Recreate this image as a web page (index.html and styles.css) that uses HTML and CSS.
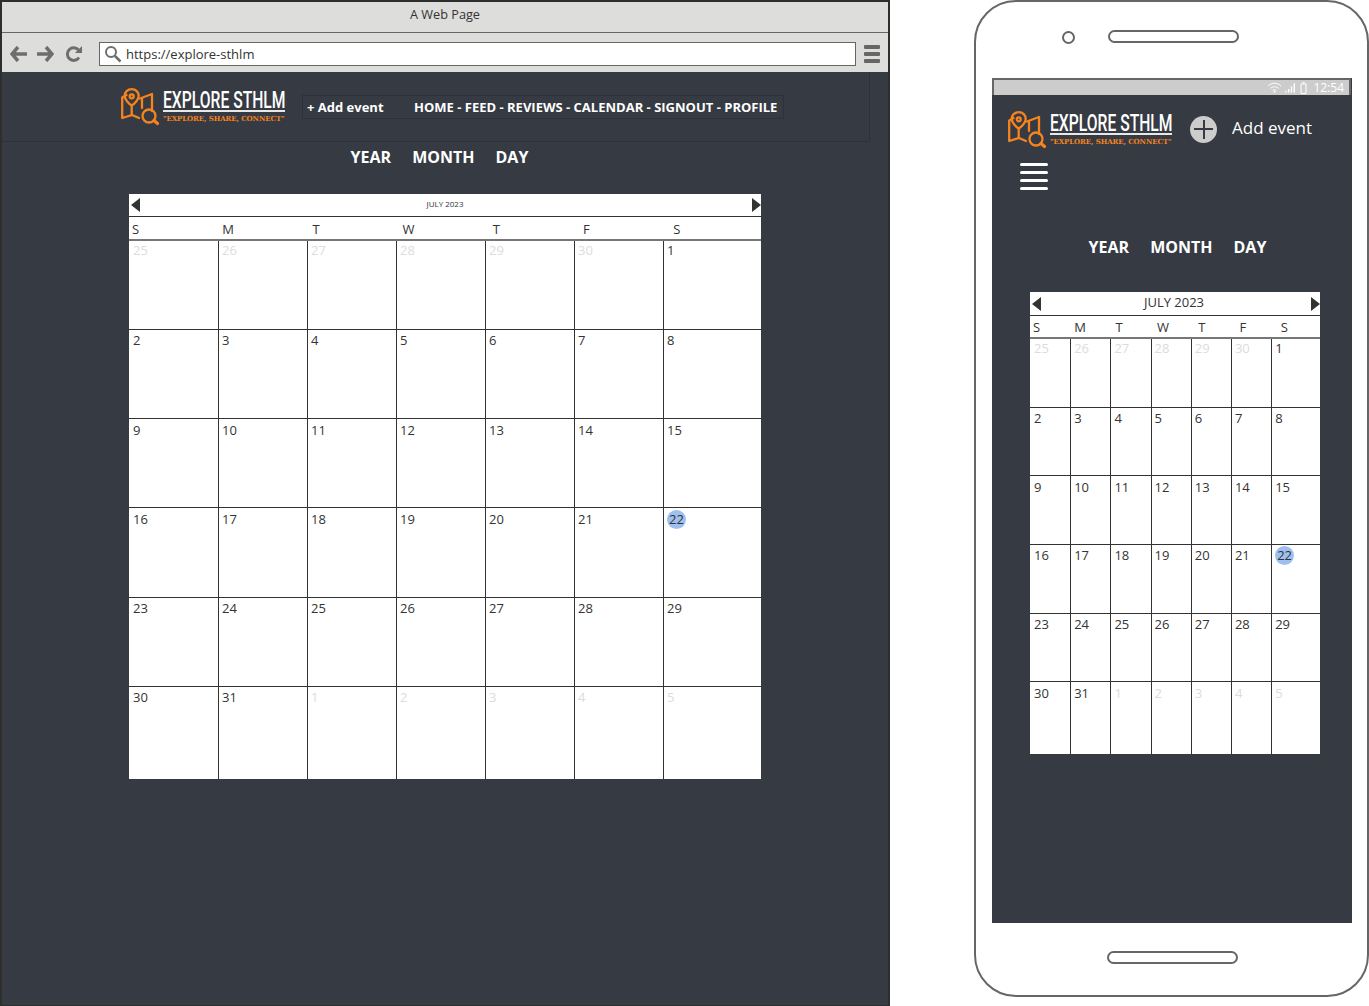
FILE: index.html
```html
<!DOCTYPE html>
<html lang="en">
<head>
<meta charset="utf-8">
<title>Explore STHLM wireframes</title>
<link rel="stylesheet" href="styles.css">
</head>
<body>
<svg class="defs" width="0" height="0" aria-hidden="true">
  <symbol id="logo-icon" viewBox="0 0 38 38">
    <g fill="none" stroke="#f5841f" stroke-width="2.300" stroke-linecap="round" stroke-linejoin="round">
      <path d="M5.500 7 1.200 9.500V30l9.800-3 7 3"/>
      <path d="M19 10.500 31 6v17"/>
      <path d="M21 10.500V20"/>
      <path d="M10.700 1.200C6.500 1.200 3.700 4.200 3.700 8c0 3.500 4.300 8 7 9.500 2.700-1.500 7-6 7-9.500 0-3.800-2.800-6.800-7-6.800Z"/>
      <circle cx="10.700" cy="8.300" r="2"/>
      <path d="M10.700 18v9"/>
      <circle cx="28" cy="28" r="6.500"/>
      <path d="m33 32.500 3.500 3" stroke-width="3.200"/>
    </g>
  </symbol>
</svg>

<main class="canvas">
  <section class="browser">
    <div class="browser-title">A Web Page</div>
    <div class="browser-bar">
      <svg class="tool" width="18" height="16" viewBox="0 0 18 16"><path d="M8 1 2 8l6 7M2.500 8H17" fill="none" stroke="#6e6e6e" stroke-width="3.500"/></svg>
      <svg class="tool" width="18" height="16" viewBox="0 0 18 16"><path d="m10 1 6 7-6 7M15.500 8H1" fill="none" stroke="#6e6e6e" stroke-width="3.500"/></svg>
      <svg class="tool tool-reload" width="18" height="16" viewBox="0 0 18 16"><path d="M14 11.500A6.300 6.300 0 1 1 13.500 4" fill="none" stroke="#6e6e6e" stroke-width="3"/><path d="M10 7h7V0Z" fill="#6e6e6e"/></svg>
      <div class="url">
        <svg width="18" height="18" viewBox="0 0 18 18"><circle cx="7" cy="7" r="5" fill="none" stroke="#6e6e6e" stroke-width="2"/><path d="m11 11 5.500 5.500" stroke="#6e6e6e" stroke-width="2.500"/></svg>
        <span>https://explore-sthlm</span>
      </div>
      <div class="bars"><i></i><i></i><i></i></div>
    </div>
    <div class="browser-page">
      <header class="site-head">
        <div class="logo">
          <svg class="logo-mark" width="38" height="38"><use href="#logo-icon"/></svg>
          <div class="logo-words"><span class="logo-name">EXPLORE STHLM</span><span class="logo-tag">"EXPLORE, SHARE, CONNECT"</span></div>
        </div>
        <nav class="site-nav"><span class="add-link">+ Add event</span><span>HOME - FEED - REVIEWS - CALENDAR - SIGNOUT - PROFILE</span></nav>
      </header>
      <div class="tabs tabs-desktop"><span>YEAR</span><span>MONTH</span><span>DAY</span></div>
      <div class="cal cal-desktop">
        <div class="cal-title"><b class="arrow-l"></b><span>JULY 2023</span><b class="arrow-r"></b></div>
        <div class="cal-week"><span>S</span><span>M</span><span>T</span><span>W</span><span>T</span><span>F</span><span>S</span></div>
        <div class="cal-grid">
          <div class="off">25</div><div class="off">26</div><div class="off">27</div><div class="off">28</div><div class="off">29</div><div class="off">30</div><div>1</div>
          <div>2</div><div>3</div><div>4</div><div>5</div><div>6</div><div>7</div><div>8</div>
          <div>9</div><div>10</div><div>11</div><div>12</div><div>13</div><div>14</div><div>15</div>
          <div>16</div><div>17</div><div>18</div><div>19</div><div>20</div><div>21</div><div><span class="today">22</span></div>
          <div>23</div><div>24</div><div>25</div><div>26</div><div>27</div><div>28</div><div>29</div>
          <div>30</div><div>31</div><div class="off">1</div><div class="off">2</div><div class="off">3</div><div class="off">4</div><div class="off">5</div>
        </div>
      </div>
    </div>
  </section>

  <section class="phone">
    <div class="phone-top"><span class="camera"></span><span class="slot"></span></div>
    <div class="screen">
      <div class="status">
        <svg width="15" height="11" viewBox="0 0 16 11"><path d="M1 4c4-4 10-4 14 0M3.500 6.500c2.500-2.300 6.500-2.300 9 0M6 8.500c1-.8 3-.8 4 0" fill="none" stroke="#fff" stroke-width="1"/><circle cx="8" cy="10" r="1" fill="#fff"/></svg>
        <svg width="12" height="11" viewBox="0 0 13 11"><path d="M1 11V9M4 11V7M7 11V4.500M10 11V1" stroke="#fff" stroke-width="1.500"/></svg>
        <svg width="7" height="12" viewBox="0 0 7 12"><path d="M1 2h5v9.500H1Z" fill="none" stroke="#fff"/><path d="M2.500.5h2" stroke="#fff"/></svg>
        <span>12:54</span>
      </div>
      <header class="phone-head">
        <div class="logo">
          <svg class="logo-mark" width="38" height="38"><use href="#logo-icon"/></svg>
          <div class="logo-words"><span class="logo-name">EXPLORE STHLM</span><span class="logo-tag">"EXPLORE, SHARE, CONNECT"</span></div>
        </div>
        <span class="plus"></span>
        <span class="phone-add">Add event</span>
      </header>
      <div class="burger"><i></i><i></i><i></i><i></i></div>
      <div class="tabs tabs-phone"><span>YEAR</span><span>MONTH</span><span>DAY</span></div>
      <div class="cal cal-phone">
        <div class="cal-title"><b class="arrow-l"></b><span>JULY 2023</span><b class="arrow-r"></b></div>
        <div class="cal-week"><span>S</span><span>M</span><span>T</span><span>W</span><span>T</span><span>F</span><span>S</span></div>
        <div class="cal-grid">
          <div class="off">25</div><div class="off">26</div><div class="off">27</div><div class="off">28</div><div class="off">29</div><div class="off">30</div><div>1</div>
          <div>2</div><div>3</div><div>4</div><div>5</div><div>6</div><div>7</div><div>8</div>
          <div>9</div><div>10</div><div>11</div><div>12</div><div>13</div><div>14</div><div>15</div>
          <div>16</div><div>17</div><div>18</div><div>19</div><div>20</div><div>21</div><div><span class="today">22</span></div>
          <div>23</div><div>24</div><div>25</div><div>26</div><div>27</div><div>28</div><div>29</div>
          <div>30</div><div>31</div><div class="off">1</div><div class="off">2</div><div class="off">3</div><div class="off">4</div><div class="off">5</div>
        </div>
      </div>
    </div>
    <div class="phone-bottom"><span class="slot"></span></div>
  </section>
</main>
</body>
</html>
```

FILE: styles.css
```css
* { box-sizing: border-box; }
html, body { margin: 0; padding: 0; background: #fff; }
body { font-family: "Open Sans", sans-serif; color: #333; overflow: hidden; }
.defs { position: absolute; }
.canvas { position: relative; width: 1369px; height: 1006px; }

/* browser mock */
.browser {
  position: absolute; left: 0; top: 0;
  width: 890px; height: 1006px;
  border: 2px solid #2e2e2e; border-width: 2px 2px 1px 2px;
  display: flex; flex-direction: column;
}
.browser-title {
  height: 31px; background: #dddddb; border-bottom: 1px solid #666;
  text-align: center; font-size: 12.700px; line-height: 24px;
}
.browser-bar {
  height: 39px; background: #dddddb;
  display: flex; align-items: center; padding: 2px 0 0 8px;
}
.tool { margin-right: 8px; flex: none; }
.tool-reload { margin-left: 3px; margin-right: 7px; }
.url {
  width: 757px; height: 24px; margin-left: 9px; background: #fff;
  border: 1px solid #666; display: flex; align-items: center;
  font-size: 13px; color: #333; padding-left: 4px; gap: 4px;
}
.bars { margin-left: 8px; display: flex; flex-direction: column; gap: 3px; }
.bars i { display: block; width: 16px; height: 4px; border-radius: 1px; background: #666; }
.browser-page { flex: 1; background: #363a42; }

.site-head {
  height: 70px; width: 868px; border-right: 1px solid #2e3137; border-bottom: 1px solid #2e3137;
  display: flex; align-items: flex-start; padding: 16px 0 0 119px;
}
.logo { display: flex; width: 165px; flex: none; gap: 4px; }
.logo-mark { flex: none; }
.logo-words { width: 122px; display: flex; flex-direction: column; margin-top: 2px; }
.logo-name {
  display: block; font: 500 23.500px/20px Roboto, sans-serif; color: #fff; white-space: nowrap;
  transform: scaleX(.667); transform-origin: left center;
  width: 122px; height: 20px;
}
.logo-tag {
  display: block; width: 122px; padding-top: 2px; border-top: 2px solid #e8e8e8;
  font: 700 7px/9px "DejaVu Serif", serif; color: #f5841f; white-space: nowrap; letter-spacing: -.1px;
}
.site-nav {
  margin: 7px 0 0 16px; width: 482px; height: 24px;
  border: 1px solid #2e3137; display: flex; align-items: center; padding-left: 4px;
  font-size: 13px; font-weight: 700; color: #fff; white-space: nowrap;
}
.add-link { width: 107px; flex: none; }

.tabs { display: flex; gap: 21px; font-size: 16px; font-weight: 700; color: #fff; line-height: 22px; justify-content: center; }
.tabs-desktop { padding-right: 11px; margin-top: 4px; }
.tabs-phone { margin-top: 46px; margin-left: 11px; }

/* calendar */
.cal { background: #fff; color: #333; display: flex; flex-direction: column; }
.cal-title { position: relative; display: flex; justify-content: center; align-items: center; padding-bottom: 3px; border-bottom: 1px solid #333; flex: none; }
.arrow-l, .arrow-r { position: absolute; top: 50%; margin-top: -7px; width: 0; height: 0; border-style: solid; border-color: transparent; border-width: 7px 0 7px 0; }
.arrow-l { left: 2px; border-right: 9px solid #333; }
.arrow-r { right: 0; border-left: 9px solid #333; }
.cal-week { display: grid; border-bottom: 2px solid #777; font-size: 13px; flex: none; align-items: center; }
.cal-grid { flex: 1; display: grid; font-size: 13px; line-height: 18px; }
.cal-grid > div { border-left: 1px solid #333; border-bottom: 1px solid #333; padding: 1px 0 0 3px; }
.cal-grid > div:nth-child(7n+1) { border-left: 0; padding-left: 4px; }
.cal-grid > div:nth-child(-n+7) { padding-top: 0; }
.cal-grid > div:nth-last-child(-n+7) { border-bottom: 0; }
.off { color: #dcdcdc; }
.today { display: inline-block; width: 19px; height: 19px; line-height: 19px; border-radius: 50%; background: #9dc0f0; text-align: center; }

.cal-desktop { width: 632px; height: 585px; margin: 26px 0 0 127px; }
.cal-desktop .cal-title { height: 23px; font-size: 8px; }
.cal-desktop .cal-week { height: 24px; padding: 2px 0 0 3px; grid-template-columns: repeat(7, 90.200px); }
.cal-desktop .cal-grid { grid-template-columns: repeat(6, 89px) 1fr; grid-template-rows: 89px 89px 89px 90px 89px 1fr; }
.cal-desktop .cal-grid > div:nth-child(n+15):nth-child(-n+28) { padding-top: 2px; }

.cal-phone { width: 290px; height: 462px; margin: 34px 0 0 38px; }
.cal-phone .cal-title { height: 24px; font-size: 13px; padding-right: 2px; }
.cal-phone .cal-week { height: 23px; grid-template-columns: repeat(7, 41.300px); padding-left: 3px; }
.cal-phone .cal-grid { grid-template-columns: repeat(6, 40.200px) 1fr; grid-template-rows: repeat(5, 68.700px) 1fr; }
.cal-phone .cal-grid > div:nth-child(n+15):nth-child(-n+21),
.cal-phone .cal-grid > div:nth-child(n+36) { padding-top: 2px; }

/* phone mock */
.phone {
  position: absolute; left: 974px; top: 0;
  width: 395px; height: 997px;
  border: 2px solid #666; border-radius: 42px;
  background: #fff;
  display: flex; flex-direction: column;
}
.phone-top { height: 76px; display: flex; padding: 28px 0 0 86px; align-items: flex-start; flex: none; }
.camera { width: 13px; height: 13px; border: 2px solid #666; border-radius: 50%; margin-top: 1px; }
.slot { display: block; width: 131px; height: 13px; border: 2px solid #666; border-radius: 7px; }
.phone-top .slot { margin-left: 33px; }
.screen { margin-left: 16px; width: 360px; height: 845px; background: #363a42; flex: none; }
.status {
  height: 17px; width: 359px; background: #ccc; border: 2px solid #666; border-width: 2px 2px 0 2px;
  display: flex; justify-content: flex-end; align-items: center; gap: 3px;
  padding-right: 5px; color: #fff; font-size: 12px; line-height: 15px;
}
.status span { margin-left: 3px; }
.phone-head { display: flex; align-items: flex-start; padding: 16px 0 0 16px; height: 68px; }
.phone-head .logo { width: 165px; }
.plus {
  position: relative; width: 27px; height: 27px; border-radius: 50%; background: #ccc; margin: 5px 0 0 17px; flex: none;
}
.plus::before { content: ""; position: absolute; left: 4px; right: 4px; top: 12px; height: 2px; background: #363a42; }
.plus::after { content: ""; position: absolute; top: 4px; bottom: 4px; left: 12.500px; width: 2px; background: #363a42; }
.phone-add { margin: 4px 0 0 15px; color: #fff; font-size: 17px; line-height: 26px; white-space: nowrap; }
.burger { margin-left: 28px; width: 28px; display: flex; flex-direction: column; gap: 5px; }
.burger i { display: block; height: 3px; border-radius: 1.500px; background: #fff; }
.phone-bottom { flex: 1; padding: 28px 0 0 131px; }
```
